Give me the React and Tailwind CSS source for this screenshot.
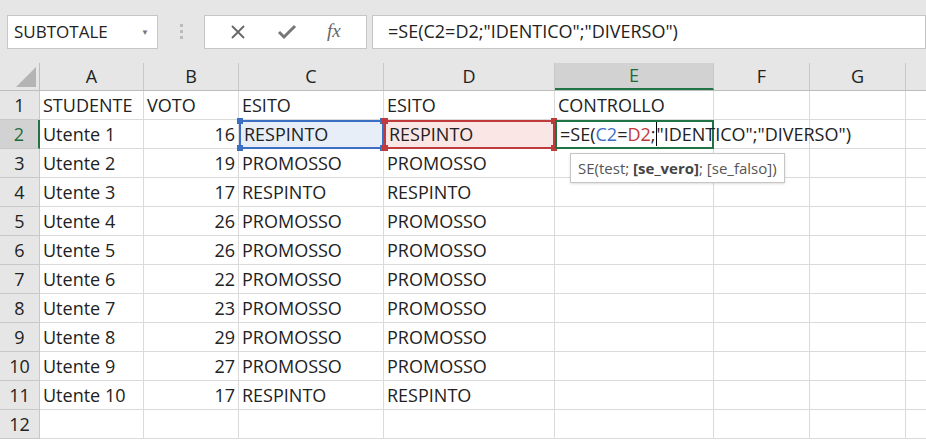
import React from "react";

const cols = [
  ["A", 104], ["B", 95], ["C", 145], ["D", 171], ["E", 159], ["F", 96], ["G", 96], ["", 60],
];
const data = [
  ["STUDENTE", "VOTO", "ESITO", "ESITO", "CONTROLLO"],
  ["Utente 1", "16", "RESPINTO", "RESPINTO", ""],
  ["Utente 2", "19", "PROMOSSO", "PROMOSSO"],
  ["Utente 3", "17", "RESPINTO", "RESPINTO"],
  ["Utente 4", "26", "PROMOSSO", "PROMOSSO"],
  ["Utente 5", "26", "PROMOSSO", "PROMOSSO"],
  ["Utente 6", "22", "PROMOSSO", "PROMOSSO"],
  ["Utente 7", "23", "PROMOSSO", "PROMOSSO"],
  ["Utente 8", "29", "PROMOSSO", "PROMOSSO"],
  ["Utente 9", "27", "PROMOSSO", "PROMOSSO"],
  ["Utente 10", "17", "RESPINTO", "RESPINTO"],
  [],
];

export default function App() {
  return (
    <div className="w-[926px] h-[442px] overflow-hidden bg-white text-[18px] text-[#222]" style={{ fontFamily: "'Open Sans', 'Noto Sans', sans-serif" }}>
      <div className="h-[63px] bg-[#e6e6e6] flex items-center pl-[7px] gap-0">
        <div className="w-[151px] shrink-0 h-[34px] bg-white border border-[#c6c6c6] flex items-center justify-between px-[6px]">
          <span className="text-[17px]">SUBTOTALE</span>
          <span className="text-[8px] text-[#777] mr-[2px]">▼</span>
        </div>
        <div className="w-[46px] shrink-0 flex justify-center flex-col items-center gap-[3px]">
          <span className="w-[3px] h-[3px] bg-[#bbb]" /><span className="w-[3px] h-[3px] bg-[#bbb]" /><span className="w-[3px] h-[3px] bg-[#bbb]" />
        </div>
        <div className="w-[163px] shrink-0 h-[34px] bg-white border border-[#c6c6c6] flex items-center justify-around px-[10px] text-[#666]">
          <svg width="16" height="16" viewBox="0 0 16 16"><path d="M2 2L14 14M14 2L2 14" stroke="#666" strokeWidth="1.8" /></svg>
          <svg width="20" height="16" viewBox="0 0 20 16"><path d="M2 8L7 13L18 2" stroke="#777" strokeWidth="3" fill="none" /></svg>
          <span className="italic text-[19px]" style={{ fontFamily: "'Liberation Serif', serif" }}>fx</span>
        </div>
        <div className="ml-[5px] flex-1 h-[34px] bg-white border border-[#c6c6c6] flex items-center pl-[15px] text-[18px]">
          =SE(C2=D2;"IDENTICO";"DIVERSO")
        </div>
      </div>
      <div className="flex h-[28px] bg-[#e6e6e6] border-b border-[#bdbdbd]">
        <div className="w-[40px] shrink-0 border-r border-[#bdbdbd] relative">
          <svg className="absolute right-[3px] bottom-[3px]" width="20" height="20"><path d="M20 0L20 20L0 20Z" fill="#b4b4b4" /></svg>
        </div>
        {cols.map(([c, w], i) => (
          <div key={i} style={{ width: w }} className={`shrink-0 flex items-center justify-center border-r border-[#c8c8c8] ${c === "E" ? "bg-[#d2d2d2] text-[#1e6b3a] border-b-2 border-b-[#217346]" : ""}`}>{c}</div>
        ))}
      </div>
      {data.map((row, r) => (
        <div key={r} className="flex h-[29px]">
          <div className={`w-[40px] shrink-0 flex items-center justify-center border-r border-b border-[#c8c8c8] ${r === 1 ? "bg-[#d2d2d2] text-[#1e6b3a] border-r-2 border-r-[#217346]" : "bg-[#e6e6e6]"}`}>{r + 1}</div>
          {cols.map(([c, w], i) => {
            let cls = "border-r border-b border-[#dadada]";
            if (r === 1 && i === 2) cls = "bg-[#e8eef8] border-2 border-[#3b6fc4] relative";
            if (r === 1 && i === 3) cls = "bg-[#fbe6e6] border-2 border-[#c0393b] relative";
            if (r === 1 && i === 4) cls = "border-2 border-[#217346] relative overflow-visible";
            const color = i === 2 ? "#3b6fc4" : "#c0393b";
            return (
              <div key={i} style={{ width: w }} className={`shrink-0 flex items-center px-[3px] whitespace-nowrap ${cls} ${i === 1 && r > 0 ? "justify-end" : ""}`}>
                {r === 1 && i === 4 ? (
                  <span className="relative z-10">=SE(<span className="text-[#3b6fc4]">C2</span>=<span className="text-[#c0393b]">D2</span>;<span className="border-l border-black" />"IDENTICO";"DIVERSO")</span>
                ) : row[i]}
                {r === 1 && (i === 2 || i === 3) && <>
                  <span className="absolute -left-[4px] -top-[4px] w-[6px] h-[6px]" style={{ background: color }} />
                  <span className="absolute -right-[4px] -top-[4px] w-[6px] h-[6px]" style={{ background: color }} />
                  <span className="absolute -left-[4px] -bottom-[4px] w-[6px] h-[6px]" style={{ background: color }} />
                  <span className="absolute -right-[4px] -bottom-[4px] w-[6px] h-[6px]" style={{ background: color }} />
                </>}
                {r === 1 && i === 4 && (
                  <div className="absolute left-[13px] top-[31px] z-20 bg-white border border-[#c6c6c6] px-[7px] h-[30px] flex items-center text-[15px] text-[#555] shadow-sm">
                    SE(test;&nbsp;<b className="text-[#444]">[se_vero]</b>; [se_falso])
                  </div>
                )}
              </div>
            );
          })}
        </div>
      ))}
    </div>
  );
}
